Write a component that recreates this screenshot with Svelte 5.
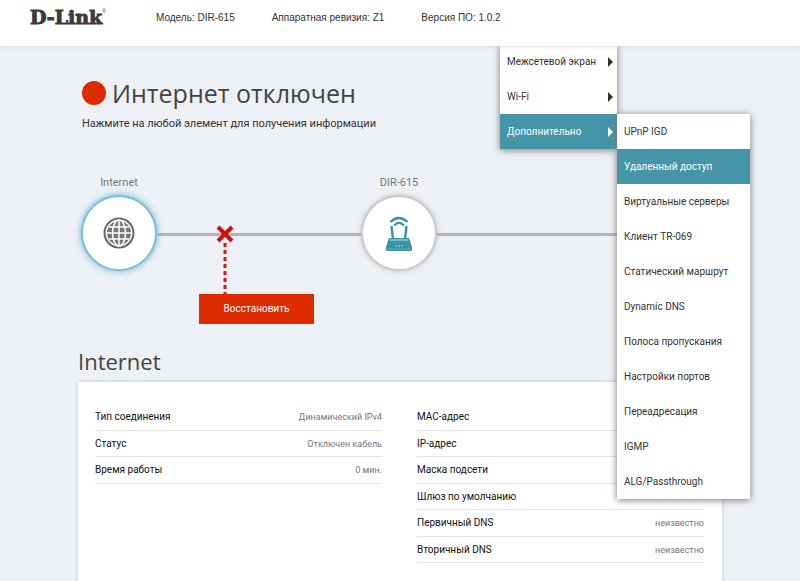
<script>
    const device = [
        { label: 'Модель', value: 'DIR-615' },
        { label: 'Аппаратная ревизия', value: 'Z1' },
        { label: 'Версия ПО', value: '1.0.2' }
    ];

    const menu = ['Межсетевой экран', 'Wi-Fi', 'Дополнительно'];
    const submenu = [
        'UPnP IGD',
        'Удаленный доступ',
        'Виртуальные серверы',
        'Клиент TR-069',
        'Статический маршрут',
        'Dynamic DNS',
        'Полоса пропускания',
        'Настройки портов',
        'Переадресация',
        'IGMP',
        'ALG/Passthrough'
    ];

    const tables = [
        [
            ['Тип соединения', 'Динамический IPv4'],
            ['Статус', 'Отключен кабель'],
            ['Время работы', '0 мин.']
        ],
        [
            ['MAC-адрес', ''],
            ['IP-адрес', ''],
            ['Маска подсети', ''],
            ['Шлюз по умолчанию', ''],
            ['Первичный DNS', 'неизвестно'],
            ['Вторичный DNS', 'неизвестно']
        ]
    ];

    let openItem = $state('Дополнительно');
    let current = $state('Удаленный доступ');
</script>

<div class="page">
    <header>
        <a class="logo" href="#home">D-Link<sup>®</sup></a>
        {#each device as item}
            <span>{item.label}: {item.value}</span>
        {/each}
    </header>

    <nav class="menu">
        {#each menu as item}
            <button class:active={openItem === item} onclick={() => (openItem = item)}>
                {item}
                <svg width="5" height="10" viewBox="0 0 5 10"><path d="M0 0L5 5L0 10Z" fill="currentColor" /></svg>
            </button>
        {/each}
        {#if openItem === 'Дополнительно'}
            <div class="submenu">
                {#each submenu as item}
                    <a href="#{item}" class:active={current === item} onclick={() => (current = item)}>{item}</a>
                {/each}
            </div>
        {/if}
    </nav>

    <main>
        <h1><i class="dot"></i>Интернет отключен</h1>
        <p class="hint">Нажмите на любой элемент для получения информации</p>

        <div class="network">
            <div class="node">
                <label for="node-internet">Internet</label>
                <button id="node-internet" class="selected">
                    <svg width="32" height="32" viewBox="0 0 32 32" fill="none">
                        <circle cx="16" cy="16" r="14.5" stroke="#666" stroke-width="2" />
                        <circle cx="16" cy="16" r="12" fill="#777" />
                        <g stroke="#fff" stroke-width="1.5">
                            <path d="M16 4V28M4 16H28M6 10H26M6 22H26" />
                            <ellipse cx="16" cy="16" rx="6.5" ry="13" />
                        </g>
                    </svg>
                </button>
            </div>
            <div class="wire">
                <div class="fault">
                    <svg width="18" height="18" viewBox="0 0 18 18">
                        <path d="M2 2L16 16M16 2L2 16" stroke="#d40d12" stroke-width="4" />
                    </svg>
                    <svg width="18" height="51" viewBox="0 0 18 51">
                        <path d="M9 0V51" stroke="#e01410" stroke-width="3" stroke-dasharray="4 3" />
                    </svg>
                    <button>Восстановить</button>
                </div>
            </div>
            <div class="node">
                <label for="node-router">DIR-615</label>
                <button id="node-router">
                    <svg width="26" height="36" viewBox="0 0 26 36" fill="none" stroke="#3b93a8">
                        <path d="M4.5 7Q13 -1 21.5 7" stroke-width="2.4" />
                        <path d="M8 10.5Q13 5.500 18 10.5" stroke-width="2.2" />
                        <path d="M5.5 11L7 24M20.5 11L19 24" stroke-width="2.4" />
                        <path d="M3 23H23L26 32V34.5Q26 36 24.5 36H1.5Q0 36 0 34.5V32Z" fill="#3b93a8" stroke="none" />
                        <path d="M4 25H22" stroke="#8ec4d0" stroke-width="1.5" />
                        <path d="M9 31H17" stroke="#a8d2dc" stroke-dasharray="2 1" />
                        <path d="M1 34H25" stroke="#68adbd" />
                    </svg>
                </button>
            </div>
            <div class="wire"></div>
        </div>

        <h2>Internet</h2>
        <section class="card">
            {#each tables as rows}
                <table>
                    <tbody>
                        {#each rows as [name, value]}
                            <tr>
                                <th scope="row">{name}</th>
                                <td>{value}</td>
                            </tr>
                        {/each}
                    </tbody>
                </table>
            {/each}
        </section>
    </main>
</div>

<style>
    :global(body) {
        margin: 0;
        background: #edf1f5;
    }

    .page {
        position: relative;
        display: flex;
        flex-direction: column;
        min-height: 100vh;
        font: 10px/16px Roboto, sans-serif;
        color: #333;
    }

    button {
        padding: 0;
        border: 0;
        font: inherit;
        cursor: pointer;
    }

    a {
        color: inherit;
        text-decoration: none;
    }

    header {
        position: relative;
        z-index: 2;
        box-sizing: border-box;
        display: flex;
        gap: 37px;
        height: 46px;
        padding: 9px 30px 0;
        background: #fff;
        box-shadow: 0 0 4px #ccd1d5;
        font: 10px/17px "Liberation Sans", sans-serif;
    }

    .logo {
        width: 89px;
        font: bold 19px/17px "DejaVu Serif", serif;
        color: #3c3c3c;
        -webkit-text-stroke: 1px #3c3c3c;
    }

    .logo sup {
        font: 5px/5px "Liberation Sans", sans-serif;
        vertical-align: top;
        -webkit-text-stroke: 0;
    }

    /* the open menu slides out from under the header */
    .menu {
        position: absolute;
        z-index: 1;
        top: 44px;
        left: 500px;
        width: 117px;
        background: #fff;
        box-shadow: 0 1px 7px #777;
    }

    .menu button {
        display: flex;
        align-items: center;
        justify-content: space-between;
        width: 100%;
        height: 35px;
        padding: 0 4px 0 7px;
        background: none;
        color: #333;
    }

    .submenu {
        position: absolute;
        top: 70px;
        left: 100%;
        width: 133px;
        background: #fff;
        box-shadow: 0 1px 7px #777;
    }

    .submenu a {
        display: block;
        padding: 0 7px;
        line-height: 35px;
        white-space: nowrap;
    }

    .menu button.active,
    .submenu a.active {
        background: #4595a9;
        color: #fff;
    }

    main {
        flex: 1;
        display: flex;
        flex-direction: column;
        padding: 30px 78px 0;
    }

    h1,
    h2 {
        margin: 0;
        font-family: "Open Sans", sans-serif;
        font-weight: 400;
        color: #444;
    }

    h1 {
        display: flex;
        align-items: center;
        gap: 6px;
        padding-left: 4px;
        font-size: 25px;
        line-height: 34px;
    }

    .dot {
        width: 24px;
        height: 24px;
        border-radius: 50%;
        background: #dd2c00;
    }

    .hint {
        margin: 6px 4px 0;
        font-size: 11px;
    }

    .network {
        display: grid;
        grid-template-columns: 76px 1fr 76px 1fr 76px;
        margin: 43px 5px 0 3px;
    }

    .node label {
        display: block;
        margin-bottom: 4px;
        font-size: 11px;
        text-align: center;
        color: #777;
    }

    .node button {
        display: flex;
        align-items: center;
        justify-content: center;
        width: 76px;
        height: 76px;
        border: 2px solid #ccc;
        border-radius: 50%;
        background: #fff;
        box-shadow: 0 0 5px #bbb;
    }

    .node button.selected {
        border-color: #7cc0d4;
        box-shadow: 0 0 7px #5fb4cc;
    }

    .wire {
        position: relative;
        padding-top: 50px;
    }

    .wire::before {
        content: '';
        position: absolute;
        top: 58px;
        left: 0;
        right: 0;
        height: 3px;
        background: #b5b5b5;
    }

    .fault {
        position: relative;
        display: flex;
        flex-direction: column;
        margin-left: 42px;
    }

    .fault svg {
        margin-left: 17px;
    }

    .fault button {
        width: 115px;
        height: 30px;
        background: #dd2c00;
        color: #fff;
    }

    h2 {
        margin: 22px 0 6px;
        font-size: 22px;
        line-height: 30px;
    }

    .card {
        flex: 1;
        display: grid;
        grid-template-columns: 1fr 1fr;
        gap: 35px;
        align-items: start;
        padding: 22px 18px 10px 17px;
        background: #fff;
        box-shadow: 0 0 4px #b8c0c6;
    }

    table {
        width: 100%;
        border-collapse: collapse;
    }

    th,
    td {
        height: 25px;
        padding: 0;
        border-bottom: 1px solid #e6e6e6;
    }

    tr:nth-child(odd) > * {
        height: 26px;
    }

    th {
        text-align: left;
        font-weight: 400;
        color: #111;
    }

    td {
        text-align: right;
        font-size: 9px;
        color: #777;
    }
</style>
